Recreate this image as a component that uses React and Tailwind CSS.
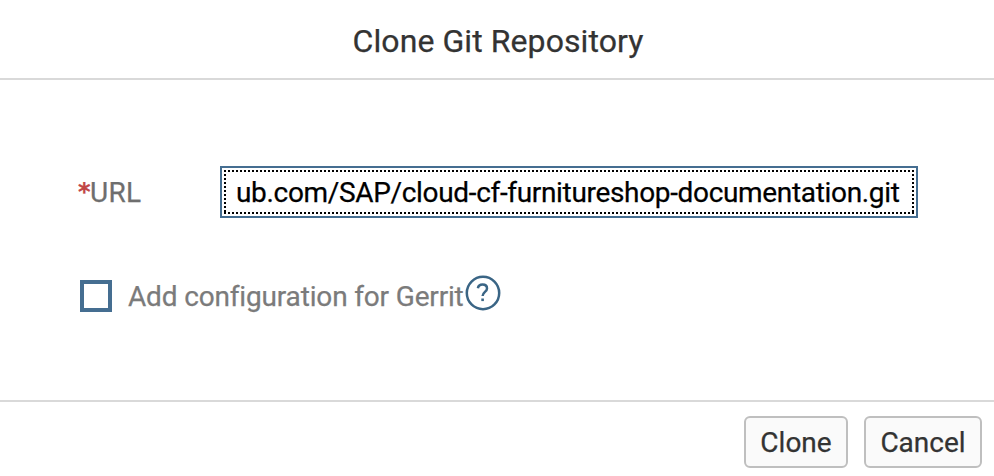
const dots =
  "bg-[repeating-linear-gradient(90deg,#000_0_2px,transparent_2px_4px),repeating-linear-gradient(90deg,#000_0_2px,transparent_2px_4px),repeating-linear-gradient(180deg,#000_0_2px,transparent_2px_4px),repeating-linear-gradient(180deg,#000_0_2px,transparent_2px_4px)] bg-no-repeat [background-size:100%_2px,100%_2px,2px_100%,2px_100%] [background-position:0_0,0_100%,0_0,100%_0]";

function Asterisk() {
  return <span className="w-[12px] pt-[6px] font-['DejaVu_Sans',sans-serif] text-[24px] leading-7 font-bold text-[#c14646]">*</span>;
}

function HelpIcon() {
  return (
    <svg className="-mt-[7px] ml-px size-9 shrink-0" viewBox="0 0 36 36" fill="none" stroke="#3a6585">
      <circle cx="18" cy="18" r="16.2" strokeWidth="2.500" />
      <path d="M12.900 13.200c.4-2.300 2.200-3.600 4.600-3.600 2.600 0 4.500 1.400 4.500 3.800 0 3.400-4.400 3.600-4.400 7.600" strokeWidth="2.500" />
      <path d="M16.300 24.800h2.600" strokeWidth="2.600" />
    </svg>
  );
}

function FooterButton({ className, label }) {
  return (
    <button className={`flex h-[52px] items-center justify-center rounded-md border-2 border-[#bfbfbf] bg-[#fafafa] pt-[2px] text-[28px] text-[#333] ${className}`}>
      {label}
    </button>
  );
}

export default function App() {
  return (
    <div className="flex h-[476px] w-[994px] flex-col overflow-hidden bg-white font-['Roboto',sans-serif] whitespace-nowrap [-webkit-text-stroke:0.25px_currentColor]">
      <header className="flex h-20 shrink-0 items-center justify-center border-b-2 border-[#d9d9d9] pt-1 pl-[2px]">
        <h1 className="text-[32px] leading-10 tracking-[0.08px] text-[#333]">Clone Git Repository</h1>
      </header>
      <main className="flex h-80 shrink-0 flex-col px-[78px] pt-[86px]">
        <div className="flex h-[52px] items-center">
          <label className="flex h-11 w-[142px] shrink-0 pt-[2px] text-[28px] text-[#6e6e6e]">
            <Asterisk />
            <span className="tracking-[0.3px]">URL</span>
          </label>
          <div className="h-[52px] w-[698px] shrink-0 border-2 border-[#456e91] p-[2px]">
            <div className={`flex size-full items-center pt-[2px] pl-[12px] text-[28px] tracking-[-0.33px] text-black ${dots}`}>
              <span>ub.com/SAP/cloud-cf-furnitureshop-documentation.git</span>
            </div>
          </div>
        </div>
        <div className="mt-[62px] flex h-8 items-center pl-[2px]">
          <span className="size-8 shrink-0 border-4 border-[#456e91]" />
          <span className="ml-4 pt-[2px] text-[28px] tracking-[-0.16px] text-[#7b7b7b]">Add configuration for Gerrit</span>
          <HelpIcon />
        </div>
      </main>
      <footer className="flex h-[76px] shrink-0 justify-end gap-4 border-t-2 border-[#d9d9d9] pt-[14px] pr-3">
        <FooterButton className="w-[104px]" label="Clone" />
        <FooterButton className="w-[118px]" label="Cancel" />
      </footer>
    </div>
  );
}
